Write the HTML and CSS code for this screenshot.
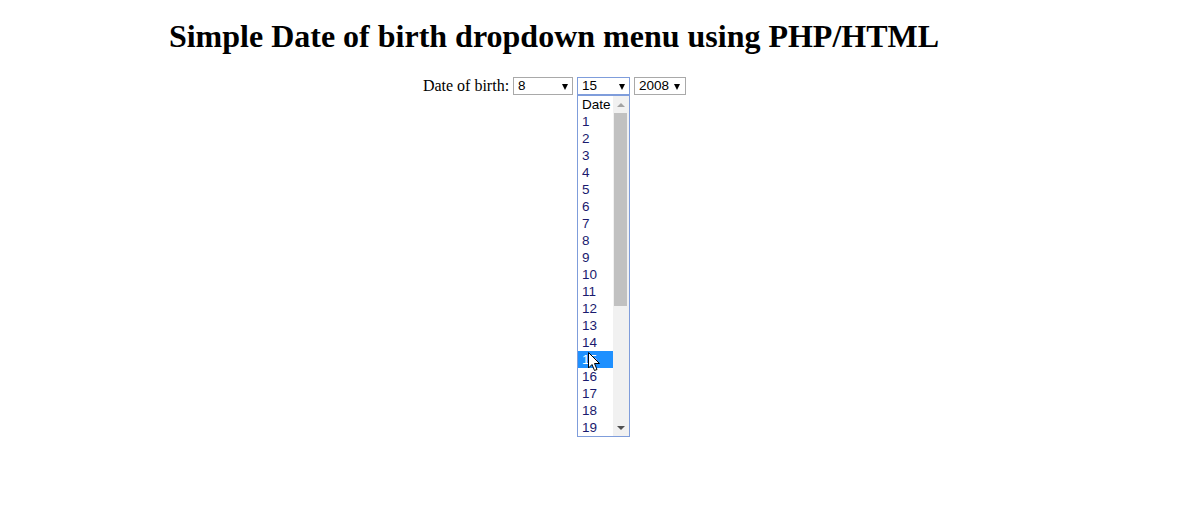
FILE: index.html
```html
<!DOCTYPE html>
<html>
<head>
<meta charset="utf-8">
<title>Date of birth</title>
<link rel="stylesheet" href="styles.css">
</head>
<body>
<div class="page">
  <h1 class="title">Simple Date of birth dropdown menu using PHP/HTML</h1>
  <div class="row">
    <span class="label">Date of birth:</span>
    <span class="sel sel-month"><span class="val">8</span><span class="arr"></span></span>
    <span class="sel-wrap">
      <span class="sel sel-day focused"><span class="val">15</span><span class="arr"></span></span>
      <div class="list">
        <div class="items">
          <div class="opt head">Date</div>
          <div class="opt">1</div>
          <div class="opt">2</div>
          <div class="opt">3</div>
          <div class="opt">4</div>
          <div class="opt">5</div>
          <div class="opt">6</div>
          <div class="opt">7</div>
          <div class="opt">8</div>
          <div class="opt">9</div>
          <div class="opt">10</div>
          <div class="opt">11</div>
          <div class="opt">12</div>
          <div class="opt">13</div>
          <div class="opt">14</div>
          <div class="opt hl">15</div>
          <div class="opt">16</div>
          <div class="opt">17</div>
          <div class="opt">18</div>
          <div class="opt">19</div>
        </div>
        <div class="sbar">
          <div class="sb-up"></div>
          <div class="sb-track"><div class="sb-thumb"></div></div>
          <div class="sb-down"></div>
        </div>
        <svg class="cursor" width="13" height="20" viewBox="0 0 13 20">
          <path d="M0.5 0.5 L0.5 16 L4 12.5 L6.5 18.5 L9 17.5 L6.5 11.5 L11.5 11.5 Z" fill="#fff" stroke="#000" stroke-width="1"/>
        </svg>
      </div>
    </span>
    <span class="sel sel-year"><span class="val">2008</span><span class="arr"></span></span>
  </div>
</div>
</body>
</html>
```
FILE: styles.css
```css
html {
  height: 100%;
  margin: 0;
  padding: 0;
  background: #fff;
}
body {
  margin: 0;
  min-height: 100%;
  box-sizing: border-box;
  padding: 8px;
  font-family: "Liberation Serif", "Times New Roman", serif;
  font-size: 16px;
  color: #000;
  background: #fff;
}
.page {
  width: 1092px;
  text-align: center;
}
.title {
  font-size: 32px;
  font-weight: bold;
  margin: 10px 0 22px 0;
  line-height: 37px;
}
.row {
  line-height: 18px;
  white-space: nowrap;
  padding-left: 1px;
}
.label {
  vertical-align: top;
}
.sel {
  display: inline-flex;
  align-items: center;
  justify-content: space-between;
  box-sizing: border-box;
  height: 18px;
  border: 1px solid #a9a9a9;
  font-family: "Liberation Sans", Arial, sans-serif;
  font-size: 13.5px;
  padding: 0 4px 0 4px;
  vertical-align: top;
  text-align: left;
  background: #fff;
}
.sel-month { width: 60px; }
.sel-day { width: 53px; }
.sel-year { width: 52px; padding-right: 5px; }
.sel.focused {
  border-color: #7f9ddb;
}
.val {
  line-height: 16px;
}
.arr {
  width: 0;
  height: 0;
  border-left: 3.5px solid transparent;
  border-right: 3.5px solid transparent;
  border-top: 6px solid #000;
  margin-top: 1px;
}
.sel-wrap {
  position: relative;
  display: inline-block;
  vertical-align: top;
  height: 18px;
}
.list {
  position: absolute;
  left: 0;
  top: 18px;
  width: 53px;
  box-sizing: border-box;
  border: 1px solid #7f9ddb;
  background: #fff;
  display: flex;
  font-family: "Liberation Sans", Arial, sans-serif;
  font-size: 13.5px;
  text-align: left;
  z-index: 5;
}
.items {
  flex: 1;
}
.opt {
  height: 17px;
  line-height: 17px;
  padding-left: 4px;
  color: #1a1a6e;
}
.opt.head {
  color: #000;
}
.opt.hl {
  background: #1e90ff;
  color: #fff;
}
.sbar {
  width: 16px;
  background: #f1f1f1;
  display: flex;
  flex-direction: column;
}
.sb-up, .sb-down {
  height: 17px;
  display: flex;
  align-items: center;
  justify-content: center;
}
.sb-up::before {
  content: "";
  border-left: 4px solid transparent;
  border-right: 4px solid transparent;
  border-bottom: 4px solid #a3a3a3;
}
.sb-down::before {
  content: "";
  border-left: 4px solid transparent;
  border-right: 4px solid transparent;
  border-top: 4px solid #505050;
}
.sb-track {
  flex: 1;
  padding: 0 2px 0 1px;
}
.sb-thumb {
  height: 193px;
  background: #c1c1c1;
}
.cursor {
  position: absolute;
  left: 10px;
  top: 256px;
}
```
